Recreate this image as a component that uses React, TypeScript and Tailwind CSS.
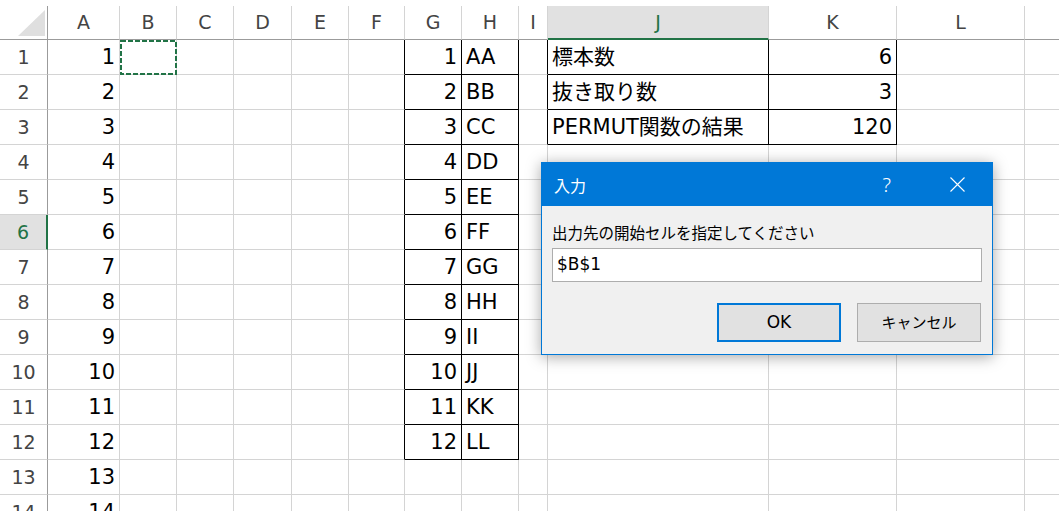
import React from "react";

type Col = { n: string; w: string };

const cols: Col[] = [
  { n: "A", w: "w-[72px]" },
  { n: "B", w: "w-[57px]" },
  { n: "C", w: "w-[57px]" },
  { n: "D", w: "w-[58px]" },
  { n: "E", w: "w-[57px]" },
  { n: "F", w: "w-[56px]" },
  { n: "G", w: "w-[57px]" },
  { n: "H", w: "w-[57px]" },
  { n: "I", w: "w-[29px]" },
  { n: "J", w: "w-[221px]" },
  { n: "K", w: "w-[128px]" },
  { n: "L", w: "w-[128px]" },
  { n: "M", w: "w-[128px]" },
];

const letters2 = ["AA", "BB", "CC", "DD", "EE", "FF", "GG", "HH", "II", "JJ", "KK", "LL"];

type Cell = { t: string; right: boolean };
const data: Record<string, Cell> = {};
for (let r = 1; r <= 14; r++) data[`A${r}`] = { t: String(r), right: true };
for (let r = 1; r <= 12; r++) {
  data[`G${r}`] = { t: String(r), right: true };
  data[`H${r}`] = { t: letters2[r - 1], right: false };
}
data["J1"] = { t: "標本数", right: false };
data["K1"] = { t: "6", right: true };
data["J2"] = { t: "抜き取り数", right: false };
data["K2"] = { t: "3", right: true };
data["J3"] = { t: "PERMUT関数の結果", right: false };
data["K3"] = { t: "120", right: true };

const inTable = (c: string, r: number) =>
  ((c === "G" || c === "H") && r >= 1 && r <= 12) ||
  ((c === "J" || c === "K") && r >= 1 && r <= 3);

const rows = Array.from({ length: 14 }, (_, i) => i + 1);

export default function App() {
  return (
    <div className="relative w-[1059px] h-[511px] overflow-hidden bg-white font-['DejaVu_Sans','Noto_Sans_CJK_JP',sans-serif]">
      <div className="h-[6px] bg-white" />
      <div className="flex h-[34px]">
        <div className="relative w-[48px] shrink-0 border-r border-b border-r-[#9b9b9b] border-b-[#9b9b9b] bg-white">
          <svg className="absolute left-0 top-0" width="48" height="34">
            <polygon points="18,30 45,30 45,4" fill="#dfdfdf" />
          </svg>
        </div>
        {cols.map((c) => {
          const active = c.n === "J";
          return (
            <div
              key={c.n}
              className={`${c.w} shrink-0 flex items-center justify-center border-r border-r-[#d4d4d4] text-[19px] ${
                active
                  ? "bg-[#e1e1e1] border-b-2 border-b-[#217346] text-[#217346]"
                  : "bg-white border-b border-b-[#9b9b9b] text-[#444444]"
              }`}
            >
              {c.n}
            </div>
          );
        })}
      </div>
      {rows.map((r) => (
        <div key={r} className="flex h-[35px]">
          <div
            className={`w-[48px] shrink-0 flex items-center justify-center border-b border-b-[#d4d4d4] text-[19px] ${
              r === 6
                ? "bg-[#e1e1e1] border-r-2 border-r-[#217346] text-[#217346]"
                : "bg-white border-r border-r-[#9b9b9b] text-[#444444]"
            }`}
          >
            {r}
          </div>
          {cols.map((c, ci) => {
            const next = cols[ci + 1]?.n ?? "";
            const blackR = inTable(c.n, r) || inTable(next, r);
            const blackB = inTable(c.n, r) || inTable(c.n, r + 1);
            const cell = data[`${c.n}${r}`];
            return (
              <div
                key={c.n}
                className={`relative ${c.w} shrink-0 flex items-center border-r border-b text-[21px] text-black ${
                  blackR ? "border-r-black" : "border-r-[#d4d4d4]"
                } ${blackB ? "border-b-black" : "border-b-[#d4d4d4]"} ${
                  cell && cell.right ? "justify-end pr-[4px]" : "justify-start pl-[4px]"
                }`}
              >
                {cell ? <span className="whitespace-nowrap leading-none">{cell.t}</span> : null}
                {c.n === "B" && r === 1 ? (
                  <svg className="absolute left-0 top-0 overflow-visible" width="57" height="35">
                    <rect
                      x="1"
                      y="1"
                      width="55"
                      height="33"
                      fill="none"
                      stroke="#217346"
                      strokeWidth="2"
                      strokeDasharray="5 2"
                    />
                  </svg>
                ) : null}
              </div>
            );
          })}
        </div>
      ))}

      <div className="absolute left-[541px] top-[162px] w-[452px] h-[193px] border border-[#0078d7] bg-[#f0f0f0] shadow-[0_2px_14px_rgba(0,0,0,0.35)] flex flex-col font-['DejaVu_Sans','Noto_Sans_CJK_JP',sans-serif]">
        <div className="h-[43px] shrink-0 bg-[#0078d7] flex items-center text-white">
          <span className="pl-[12px] text-[16px] font-['Noto_Sans_CJK_JP',sans-serif]">入力</span>
          <span className="ml-auto text-[20px] leading-none font-['Noto_Sans',sans-serif] font-light">?</span>
          <svg className="ml-[59px] mr-[27px]" width="15" height="15" viewBox="0 0 15 15">
            <path d="M0.5 0.5 L14.5 14.5 M14.5 0.5 L0.5 14.5" stroke="white" strokeWidth="1.1" fill="none" />
          </svg>
        </div>
        <div className="flex flex-col px-[10px]">
          <div className="mt-[16px] text-[15.5px] leading-[20px] text-black font-['Noto_Sans_CJK_JP',sans-serif] whitespace-nowrap">
            出力先の開始セルを指定してください
          </div>
          <div className="mt-[6px] h-[34px] bg-white border border-[#adadad] flex items-center pl-[4px] text-[17px] text-black">
            $B$1
          </div>
          <div className="mt-[21px] flex justify-end gap-[16px] pr-[1px]">
            <div className="w-[124px] h-[39px] border-2 border-[#0078d7] bg-[#e1e1e1] flex items-center justify-center text-[17px] text-black">
              OK
            </div>
            <div className="w-[124px] h-[39px] border border-[#adadad] bg-[#e1e1e1] flex items-center justify-center text-[15px] text-black font-['Noto_Sans_CJK_JP',sans-serif]">
              キャンセル
            </div>
          </div>
        </div>
      </div>
    </div>
  );
}
